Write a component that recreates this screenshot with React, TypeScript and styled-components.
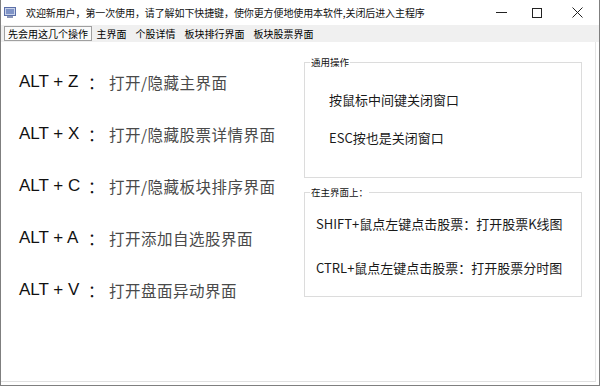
import React from "react";
import styled, { createGlobalStyle } from "styled-components";

const Global = createGlobalStyle`
  html, body { margin: 0; padding: 0; background: #ffffff; }
  body { font-family: "Noto Sans CJK SC", "Noto Sans", sans-serif; }
  #root { width: 600px; height: 386px; }
`;

const Win = styled.div`
  width: 600px;
  height: 386px;
  box-sizing: border-box;
  border: 1px solid #7f7f7f;
  border-top: none;
  background: #ffffff;
  display: flex;
  flex-direction: column;
  overflow: hidden;
`;

const TitleBar = styled.div`
  height: 25px;
  flex: none;
  display: flex;
  align-items: center;
  background: #ffffff;
  padding-left: 3px;
`;

const TitleText = styled.div`
  margin-left: 10px;
  font-size: 10px;
  color: #111;
  white-space: nowrap;
  flex: 1;
  letter-spacing: -0.1px;
`;

const Controls = styled.div`
  display: flex;
  align-items: center;
  height: 25px;
`;

const CtrlBtn = styled.div<{ $w: number }>`
  width: ${(p) => p.$w}px;
  height: 25px;
  display: flex;
  align-items: center;
  justify-content: center;
`;

const TabStrip = styled.div`
  height: 17px;
  flex: none;
  background: #f0f0f0;
  display: flex;
  align-items: flex-end;
  padding-left: 3px;
`;

const Tab = styled.div<{ $active?: boolean }>`
  font-size: 10px;
  line-height: 13px;
  color: #000;
  white-space: nowrap;
  padding: ${(p) => (p.$active ? "0 3px" : "0 3.5px")};
  height: 15px;
  box-sizing: border-box;
  margin-bottom: 1px;
  border: ${(p) => (p.$active ? "1px solid #a0a0a0" : "1px solid transparent")};
  background: ${(p) => (p.$active ? "#fafafa" : "transparent")};
`;

const Page = styled.div`
  flex: 1;
  display: grid;
  grid-template-columns: 303px 278px;
  margin: 0 3px 3px 0;
  border-right: 1px solid #e6e6e6;
  border-bottom: 1px solid #e0e0e0;
`;

const LeftCol = styled.div`
  display: flex;
  flex-direction: column;
  padding: 14px 0 0 18px;
`;

const Row = styled.div`
  height: 52px;
  display: flex;
  align-items: center;
`;

const Key = styled.span`
  width: 69px;
  font-family: "Liberation Sans", "Noto Sans CJK SC", sans-serif;
  font-size: 17px;
  color: #111;
  white-space: nowrap;
`;

const Colon = styled.span`
  width: 21px;
  font-size: 16px;
  color: #111;
`;

const Desc = styled.span`
  font-size: 15.5px;
  color: #4a4a4a;
  white-space: nowrap;
  letter-spacing: 0.5px;
`;

const RightCol = styled.div`
  display: flex;
  flex-direction: column;
  gap: 14px;
  padding-top: 20px;
`;

const Group = styled.div<{ $h: number; $pt: number; $pl: number; $gap: number }>`
  position: relative;
  height: ${(p) => p.$h}px;
  box-sizing: border-box;
  border: 1px solid #dcdcdc;
  padding: ${(p) => `${p.$pt}px 0 0 ${p.$pl}px`};
  display: flex;
  flex-direction: column;
  gap: ${(p) => p.$gap}px;
`;

const Legend = styled.span`
  position: absolute;
  top: -8px;
  left: 5px;
  padding: 0 1px;
  background: #ffffff;
  font-size: 9.5px;
  line-height: 14px;
  color: #111;
`;

const Line = styled.div`
  font-size: 13px;
  line-height: 20px;
  color: #1a1a1a;
  white-space: nowrap;
`;

const shortcuts = [
  { k: "ALT + Z", d: "打开/隐藏主界面" },
  { k: "ALT + X", d: "打开/隐藏股票详情界面" },
  { k: "ALT + C", d: "打开/隐藏板块排序界面" },
  { k: "ALT + A", d: "打开添加自选股界面" },
  { k: "ALT + V", d: "打开盘面异动界面" },
];

const tabs = ["先会用这几个操作", "主界面", "个股详情", "板块排行界面", "板块股票界面"];

export default function App() {
  return (
    <>
      <Global />
      <Win>
        <TitleBar>
          <svg width="12" height="11" viewBox="0 0 12 11">
            <rect x="0.5" y="0.5" width="11" height="8" fill="#c9d3ea" stroke="#5b6fa8" />
            <rect x="2" y="2" width="8" height="5" fill="#7f93c6" />
            <rect x="3" y="9" width="6" height="2" fill="#8a96b8" />
          </svg>
          <TitleText>欢迎新用户，第一次使用，请了解如下快捷键，使你更方便地使用本软件,关闭后进入主程序</TitleText>
          <Controls>
            <CtrlBtn $w={36}>
              <svg width="11" height="11" viewBox="0 0 11 11">
                <line x1="0" y1="5.5" x2="11" y2="5.5" stroke="#222" strokeWidth="1" />
              </svg>
            </CtrlBtn>
            <CtrlBtn $w={36}>
              <svg width="10" height="10" viewBox="0 0 10 10">
                <rect x="0.5" y="0.5" width="9" height="9" fill="none" stroke="#222" strokeWidth="1" />
              </svg>
            </CtrlBtn>
            <CtrlBtn $w={44}>
              <svg width="11" height="11" viewBox="0 0 11 11">
                <line x1="0.5" y1="0.5" x2="10.5" y2="10.5" stroke="#222" strokeWidth="1" />
                <line x1="10.5" y1="0.5" x2="0.5" y2="10.5" stroke="#222" strokeWidth="1" />
              </svg>
            </CtrlBtn>
          </Controls>
        </TitleBar>
        <TabStrip>
          {tabs.map((t, i) => (
            <Tab key={t} $active={i === 0}>
              {t}
            </Tab>
          ))}
        </TabStrip>
        <Page>
          <LeftCol>
            {shortcuts.map((s) => (
              <Row key={s.k}>
                <Key>{s.k}</Key>
                <Colon>：</Colon>
                <Desc>{s.d}</Desc>
              </Row>
            ))}
          </LeftCol>
          <RightCol>
            <Group $h={116} $pt={27} $pl={24} $gap={18}>
              <Legend>通用操作</Legend>
              <Line>按鼠标中间键关闭窗口</Line>
              <Line>ESC按也是关闭窗口</Line>
            </Group>
            <Group $h={105} $pt={21} $pl={11} $gap={24}>
              <Legend>在主界面上：</Legend>
              <Line>SHIFT+鼠点左键点击股票：打开股票K线图</Line>
              <Line>CTRL+鼠点左键点击股票：打开股票分时图</Line>
            </Group>
          </RightCol>
        </Page>
      </Win>
    </>
  );
}
